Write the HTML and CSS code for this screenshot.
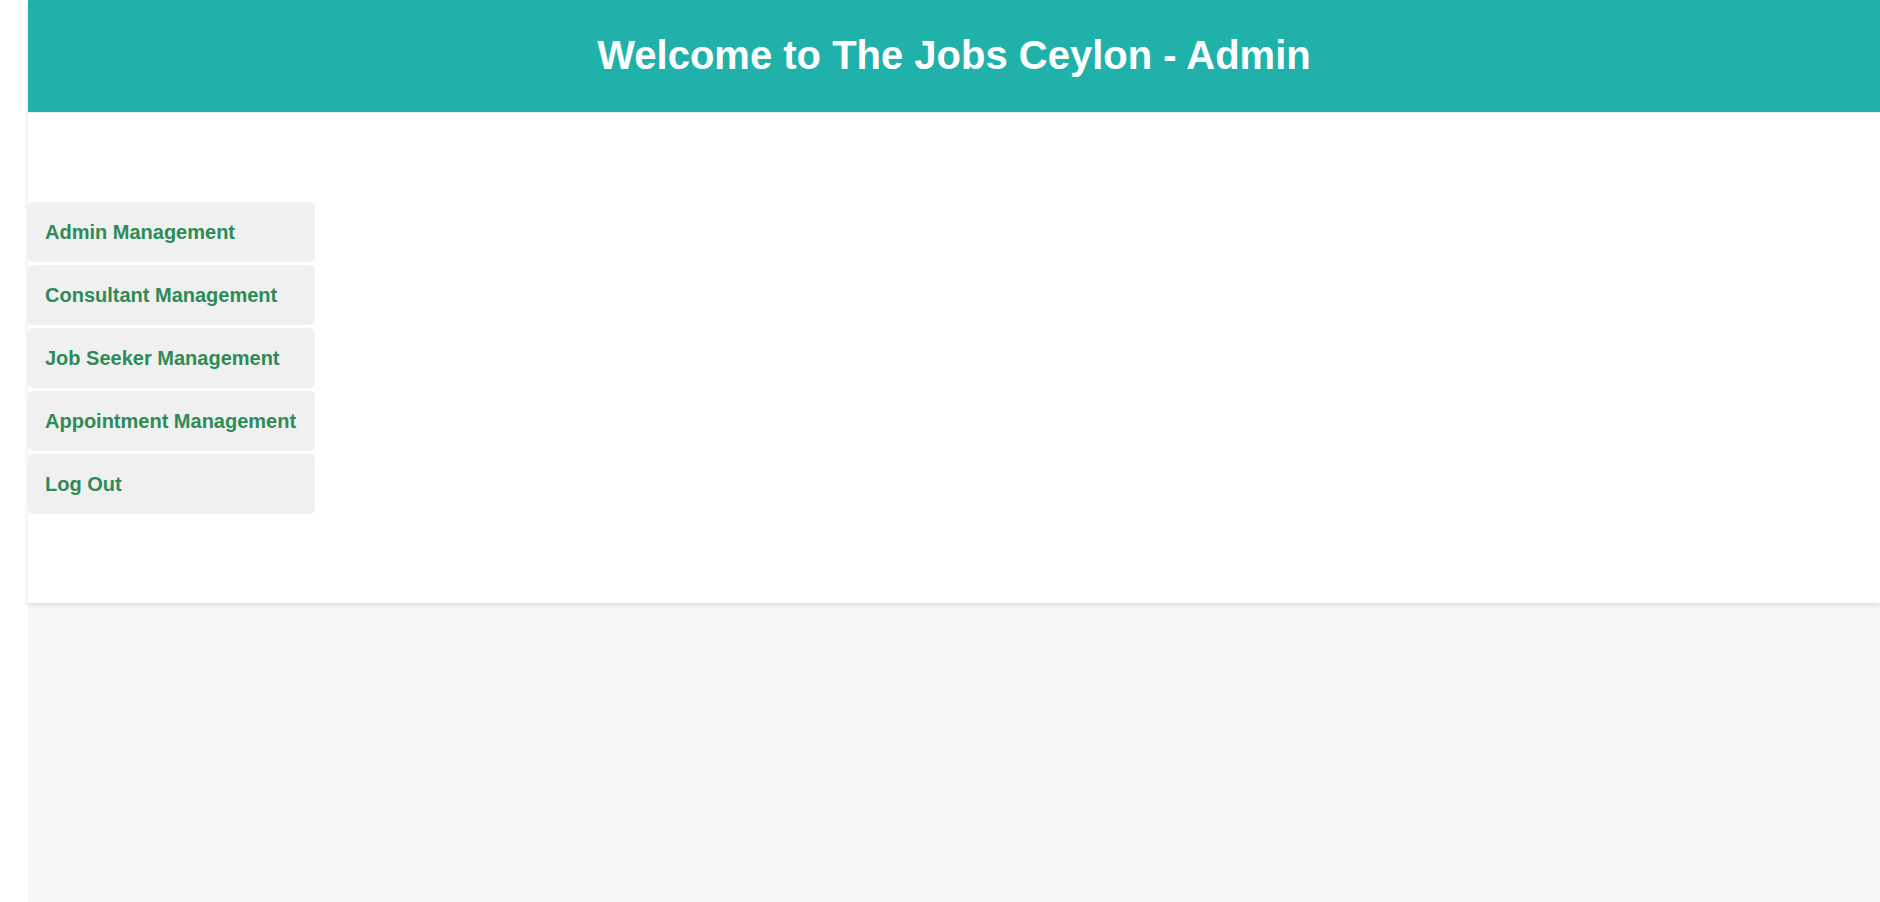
FILE: index.html
```html
<!DOCTYPE html>
<html lang="en">
<head>
<meta charset="utf-8">
<title>The Jobs Ceylon - Admin</title>
<link rel="stylesheet" href="styles.css">
</head>
<body>
<div class="page">
  <div class="panel">
    <header class="header">
      <h1 class="title">Welcome to The Jobs Ceylon - Admin</h1>
    </header>
    <nav class="sidebar">
      <a class="nav-item" href="#">Admin Management</a>
      <a class="nav-item" href="#">Consultant Management</a>
      <a class="nav-item" href="#">Job Seeker Management</a>
      <a class="nav-item" href="#">Appointment Management</a>
      <a class="nav-item" href="#">Log Out</a>
    </nav>
  </div>
</div>
</body>
</html>
```
FILE: styles.css
```css
html, body {
  margin: 0;
  padding: 0;
  background: #ffffff;
  font-family: "Liberation Sans", Arial, sans-serif;
}
.page {
  margin-left: 28px;
  min-height: 902px;
  background: #f7f8fa;
}
.panel {
  background: #ffffff;
  box-shadow: 0 2px 5px rgba(0, 0, 0, 0.13);
  padding-bottom: 89px;
}
.header {
  height: 113px;
  background: #20b2aa;
  display: flex;
  align-items: center;
  justify-content: center;
  border-bottom: 1px solid #e6eeee;
  box-sizing: border-box;
}
.title {
  margin: 0;
  color: #ffffff;
  font-size: 40px;
  font-weight: bold;
  line-height: 46px;
  padding-bottom: 2px;
}
.sidebar {
  width: 287px;
  margin-top: 89px;
  display: flex;
  flex-direction: column;
  gap: 3px;
}
.nav-item {
  display: flex;
  align-items: center;
  height: 60px;
  padding-left: 17px;
  background: #f0f0f0;
  border-radius: 5px;
  color: #2e8b57;
  font-size: 20px;
  font-weight: bold;
  text-decoration: none;
}
```
